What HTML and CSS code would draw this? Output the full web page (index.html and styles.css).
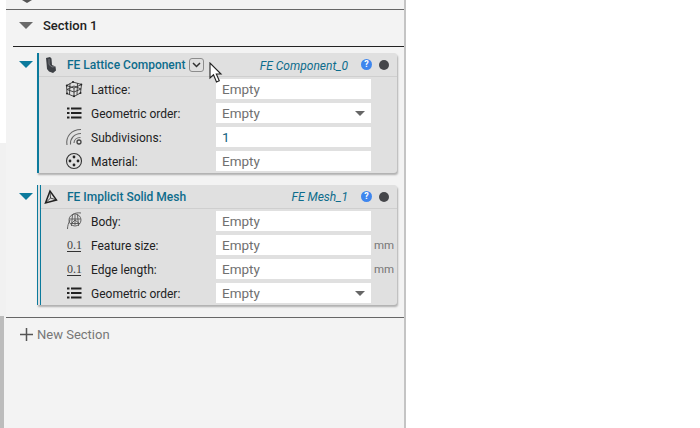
FILE: index.html
```html
<!DOCTYPE html>
<html lang="en">
<head>
<meta charset="utf-8">
<title>Sections</title>
<link rel="stylesheet" href="styles.css">
</head>
<body>
<div class="app">
  <div class="gutter"><div class="gutter-top"></div><div class="gutter-mid"></div><div class="gutter-low"></div></div>
  <main class="panel">
    <div class="stub"><svg class="stub-mark" width="10" height="3" viewBox="0 0 10 3"><path d="M0 0H10L5 3Z" fill="#555"/></svg></div>
    <header class="section-head">
      <span class="tri tri-gray"></span>
      <span class="section-title">Section 1</span>
    </header>
    <div class="section-body">

      <div class="feature">
        <span class="tri tri-teal"></span>
        <section class="card">
          <div class="card-head">
            <svg class="head-icon" width="14" height="18" viewBox="0 0 14 18"><path d="M2 2 6 1l1.500 1.500L8 9l3.500 1.500.5 4-3 2.500-4-1.500L3 13 2.500 7Z" fill="#3d4045"/><path d="M5 3v5.500L8 11l3-.5" fill="none" stroke="#85878b" stroke-width=".8"/></svg>
            <span class="card-title">FE Lattice Component</span>
            <span class="menu-btn"><svg width="9" height="6" viewBox="0 0 9 6"><path d="M1 1l3.500 3.500L8 1" fill="none" stroke="#333" stroke-width="1.500"/></svg></span>
            <span class="card-name">FE Component_0</span>
            <span class="help">?</span>
            <span class="dot"></span>
          </div>
          <div class="row">
            <svg class="row-icon" width="18" height="18" viewBox="0 0 18 18"><g fill="none" stroke="#333" stroke-width=".9"><path d="M1.500 5.500 8 2l8.500 2.500-1 8.500L9 16.500 2 13.500Z"/><path d="M1.500 5.500 9 8l7.500-3.500M9 8v8.500M5 3.500l-.5 11M12.500 3.300l-.5 11.500M2 9.500l7 2.500 7-3M2 9.500 9 6l7 3"/></g><g fill="#222"><circle cx="1.800" cy="5.500" r="1"/><circle cx="8" cy="2" r="1"/><circle cx="16.300" cy="4.500" r="1"/><circle cx="9" cy="16.300" r="1"/><circle cx="2" cy="13.500" r="1"/><circle cx="15.500" cy="13" r="1"/></g></svg>
            <span class="label">Lattice:</span>
            <span class="field empty">Empty</span>
            <span class="unit"></span>
          </div>
          <div class="row">
            <svg class="row-icon" width="18" height="18" viewBox="0 0 18 18"><path d="M2 3.500h2.500v2H2zM6 3.500h10.500v2H6zM2 8h2.500v2H2zM6 8h10.500v2H6zM2 12.500h2.500v2H2zM6 12.500h10.500v2H6z" fill="#222"/></svg>
            <span class="label">Geometric order:</span>
            <span class="field empty select">Empty<span class="caret"></span></span>
            <span class="unit"></span>
          </div>
          <div class="row">
            <svg class="row-icon" width="18" height="18" viewBox="0 0 18 18"><g fill="none" stroke="#666" stroke-width="1.100"><path d="M2 17C.5 9 6 1.500 16 1.500"/><path d="M5.500 16.500C5 11 9 5.500 16 5.500"/><path d="M9 15C9 12 11.500 9.500 15.500 9.500"/></g><circle cx="14" cy="14" r="2" fill="none" stroke="#444" stroke-width="1.300"/></svg>
            <span class="label">Subdivisions:</span>
            <span class="field value">1</span>
            <span class="unit"></span>
          </div>
          <div class="row">
            <svg class="row-icon" width="18" height="18" viewBox="0 0 18 18"><circle cx="9" cy="9" r="7.500" fill="none" stroke="#333" stroke-width="1.100"/><g fill="#222"><circle cx="9" cy="5" r="1.400"/><circle cx="5" cy="9" r="1.400"/><circle cx="13" cy="9" r="1.400"/><circle cx="9" cy="13" r="1.400"/></g></svg>
            <span class="label">Material:</span>
            <span class="field empty">Empty</span>
            <span class="unit"></span>
          </div>
        </section>
      </div>

      <div class="feature">
        <span class="tri tri-teal"></span>
        <section class="card card-double">
          <div class="card-head">
            <svg class="head-icon" width="14" height="18" viewBox="0 0 14 18"><g fill="none" stroke="#222" stroke-width="1.500"><path d="M6 3 1.500 15 12.500 12Z"/><path d="M6 3 6.500 10 1.500 15M6.500 10l6 2" stroke-width=".8"/></g></svg>
            <span class="card-title">FE Implicit Solid Mesh</span>
            <span class="card-name">FE Mesh_1</span>
            <span class="help">?</span>
            <span class="dot"></span>
          </div>
          <div class="row">
            <svg class="row-icon" width="18" height="18" viewBox="0 0 18 18"><g fill="none" stroke="#555" stroke-width=".9"><circle cx="10" cy="8" r="6"/><path d="M4.500 7h11M5.500 11.500h9M7.500 2.500 6.500 14M12.500 2.500 13.500 14M2.500 17c0-3 1-6 2.500-9M16 1c-3-.5-6 0-8.500 1.500M10 8l-4 4M10 8l5 4M10 3v10"/></g></svg>
            <span class="label">Body:</span>
            <span class="field empty">Empty</span>
            <span class="unit"></span>
          </div>
          <div class="row">
            <span class="num-icon">0.1</span>
            <span class="label">Feature size:</span>
            <span class="field empty">Empty</span>
            <span class="unit">mm</span>
          </div>
          <div class="row">
            <span class="num-icon">0.1</span>
            <span class="label">Edge length:</span>
            <span class="field empty">Empty</span>
            <span class="unit">mm</span>
          </div>
          <div class="row">
            <svg class="row-icon" width="18" height="18" viewBox="0 0 18 18"><path d="M2 3.500h2.500v2H2zM6 3.500h10.500v2H6zM2 8h2.500v2H2zM6 8h10.500v2H6zM2 12.500h2.500v2H2zM6 12.500h10.500v2H6z" fill="#222"/></svg>
            <span class="label">Geometric order:</span>
            <span class="field empty select">Empty<span class="caret"></span></span>
            <span class="unit"></span>
          </div>
        </section>
      </div>

    </div>
    <footer class="new-section">
      <svg width="13" height="13" viewBox="0 0 13 13"><path d="M6.500 0v13M0 6.500h13" stroke="#555" stroke-width="1.500"/></svg>
      <span>New Section</span>
    </footer>
  </main>
  <div class="blank"></div>
</div>
<svg class="cursor" width="14" height="22" viewBox="0 0 14 22"><path d="M1 1v15l3.500-3.200L7.500 20l2.800-1.200-3-6.800H12Z" fill="#fff" stroke="#222" stroke-width="1.100"/></svg>
</body>
</html>
```
FILE: styles.css
```css
* { box-sizing: border-box; }
html, body { margin: 0; height: 100%; background: #fff; overflow: hidden; }
body { font-family: Roboto, "Liberation Sans", sans-serif; font-size: 13px; color: #222; position: relative; }

.app { display: flex; width: 700px; height: 428px; }

.gutter { width: 6px; display: flex; flex-direction: column; flex: none; }
.gutter-top { height: 143px; background: #fff; }
.gutter-mid { height: 173px; background: #f1f1f1; }
.gutter-low { flex: 1; background: linear-gradient(90deg, #bcbcbc 0 4px, #f3f3f3 4px); }

.panel { width: 400px; flex: none; background: #f3f3f3; border-right: 2px solid #c4c4c4; display: flex; flex-direction: column; }
.stub { height: 10px; border-bottom: 1px solid #666; padding-left: 16px; }
.stub-mark { display: block; }

.section-head { height: 37px; margin-left: 7px; border-bottom: 1px solid #222; display: flex; align-items: center; padding: 0 0 5px 6px; gap: 10px; }
.section-title { font-weight: 500; font-size: 13px; color: #222; }

.tri { width: 0; height: 0; border-style: solid; border-width: 7px 7px 0; border-color: transparent; display: block; flex: none; }
.tri-gray { border-top-color: #6a6a6a; }
.tri-teal { border-top-color: #0b7a9c; margin-top: 8px; }

.section-body { height: 271px; border-bottom: 1px solid #666; padding: 6px 0 0 13px; display: flex; flex-direction: column; gap: 12px; }
.feature { display: flex; gap: 4px; }

.card { width: 360px; height: 120px; background: #e0e0e0; border-left: 2px solid #0b7a9c; border-radius: 0 3px 3px 0; box-shadow: 1px 2px 2px rgba(0,0,0,.28); }
.card-double { border-left: 4px double #0b7a9c; }

.card-head { height: 24px; border-bottom: 1px solid #cfcfcf; display: flex; align-items: center; padding: 0 8px 0 5px; }
.head-icon { flex: none; margin-right: 9px; }
.card-double .head-icon { margin-left: -2px; }
.card-title { font-weight: 500; font-size: 12px; color: #0d6c8c; }
.menu-btn { width: 15px; height: 14px; margin-left: 4px; border: 1px solid #8c8c8c; border-radius: 3px; display: flex; align-items: center; justify-content: center; }
.card-name { margin-left: auto; padding-top: 2px; font-style: italic; font-size: 12px; color: #0d6c8c; }
.card-double .card-name { padding-top: 1px; }
.help { width: 11px; height: 11px; margin-left: 13px; border-radius: 50%; background: #3e86ee; color: #fff; font-size: 9px; font-weight: 700; line-height: 11px; text-align: center; flex: none; }
.dot { width: 10px; height: 10px; margin-left: 7px; border-radius: 50%; background: #45464a; flex: none; }

.row { height: 24px; display: flex; align-items: center; padding-left: 26px; }
.card-double .row { padding-left: 24px; }
.row-icon { flex: none; margin-right: 8px; width: 18px; }
.num-icon { width: 14px; margin: 0 10px 0 2px; font-family: "Liberation Serif", serif; font-size: 12px; color: #444; text-align: center; border-bottom: 1.500px solid #333; line-height: 12px; flex: none; }
.label { width: 125px; padding-top: 1px; font-size: 12px; color: #222; flex: none; }
.field { width: 155px; height: 20px; background: #fff; font-size: 13.500px; line-height: 20px; padding-left: 6px; flex: none; display: flex; justify-content: space-between; }
.empty { color: #707070; }
.value { color: #0d5f80; }
.caret { width: 0; height: 0; border-style: solid; border-width: 5px 5px 0; border-color: #666 transparent transparent; margin: 8px 6px 0 0; }
.unit { margin-left: 3px; font-size: 11.500px; color: #777; }

.new-section { display: flex; align-items: center; gap: 4px; margin-left: 14px; height: 32px; color: #777; font-size: 13px; }

.blank { flex: 1; background: #fff; }

.cursor { position: absolute; left: 209px; top: 62px; }
```
